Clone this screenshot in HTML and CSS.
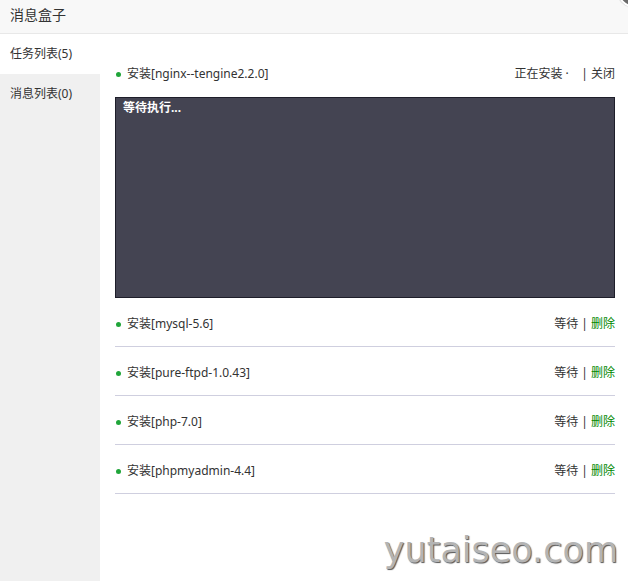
FILE: index.html
```html
<!DOCTYPE html>
<html lang="zh-CN">
<head>
    <meta charset="UTF-8">
    <title>消息盒子</title>
    <link rel="stylesheet" href="styles.css">
</head>
<body>

<div class="caixa">
    <div class="titulo">消息盒子</div>
    <span class="fechar"></span>
    <div class="corpo">
        <ul class="menu">
            <li class="ativo">任务列表(5)</li>
            <li>消息列表(0)</li>
        </ul>
        <div class="tarefas">
            <div class="linha primeira">
                <span class="nome">安装[nginx--tengine2.2.0]</span>
                <span class="acoes">正在安装 ·&nbsp;&nbsp;&nbsp;&nbsp;| 关闭</span>
            </div>
            <div class="console">等待执行...</div>
            <div class="linha">
                <span class="nome">安装[mysql-5.6]</span>
                <span class="acoes">等待 | <a href="#">删除</a></span>
            </div>
            <div class="linha">
                <span class="nome">安装[pure-ftpd-1.0.43]</span>
                <span class="acoes">等待 | <a href="#">删除</a></span>
            </div>
            <div class="linha">
                <span class="nome">安装[php-7.0]</span>
                <span class="acoes">等待 | <a href="#">删除</a></span>
            </div>
            <div class="linha">
                <span class="nome">安装[phpmyadmin-4.4]</span>
                <span class="acoes">等待 | <a href="#">删除</a></span>
            </div>
        </div>
    </div>
    <div class="marca">yutaiseo.com</div>
</div>

</body>
</html>
```

FILE: styles.css
```css
body {
    margin: 0;
    font-family: "Noto Sans", "Noto Sans CJK SC", sans-serif;
    font-size: 12px;
    color: #333;
    background: #fff;
    overflow: hidden;
}
.caixa {
    position: relative;
    height: 100vh;
    display: flex;
    flex-direction: column;
}
.titulo {
    height: 33px;
    line-height: 30px;
    padding-left: 10px;
    font-size: 14px;
    background-color: #f8f8f8;
    border-bottom: 1px solid #e8e8e8;
}
.fechar {
    position: absolute;
    top: -32px;
    right: -28px;
    width: 36px;
    height: 36px;
    border-radius: 50%;
    background-color: #6b6b6b;
    border: 2px solid #fff;
    box-shadow: 0 0 1px #999;
}
.corpo {
    flex: 1;
    display: flex;
}
.menu {
    list-style: none;
    margin: 0;
    padding: 0;
    width: 100px;
    background-color: #f0f0f0;
}
.menu li {
    height: 40px;
    line-height: 40px;
    padding-left: 10px;
}
.menu li.ativo {
    background-color: #fff;
}
.tarefas {
    flex: 1;
    padding: 0 13px 0 15px;
}
.linha {
    display: flex;
    justify-content: space-between;
    line-height: 20px;
    padding: 16px 0 12px;
    border-bottom: 1px solid #cfcfdf;
}
.linha.primeira {
    padding: 30px 0 13px;
    border-bottom: none;
}
.nome {
    position: relative;
    padding-left: 12px;
}
.nome::before {
    content: "";
    position: absolute;
    left: 1px;
    top: 8px;
    width: 5px;
    height: 5px;
    border-radius: 50%;
    background-color: #20a53a;
}
.acoes a {
    color: #080;
    text-decoration: none;
}
.console {
    height: 195px;
    padding: 2px 7px;
    line-height: 16px;
    background-color: #444452;
    border: 1px solid #1e1e2a;
    color: #fff;
    font-weight: bold;
}
.marca {
    position: absolute;
    right: 10px;
    bottom: 11px;
    font-family: "DejaVu Sans", sans-serif;
    font-size: 35px;
    color: #b4b4b4;
    text-shadow: 1px 1px 1px #555;
}
```
